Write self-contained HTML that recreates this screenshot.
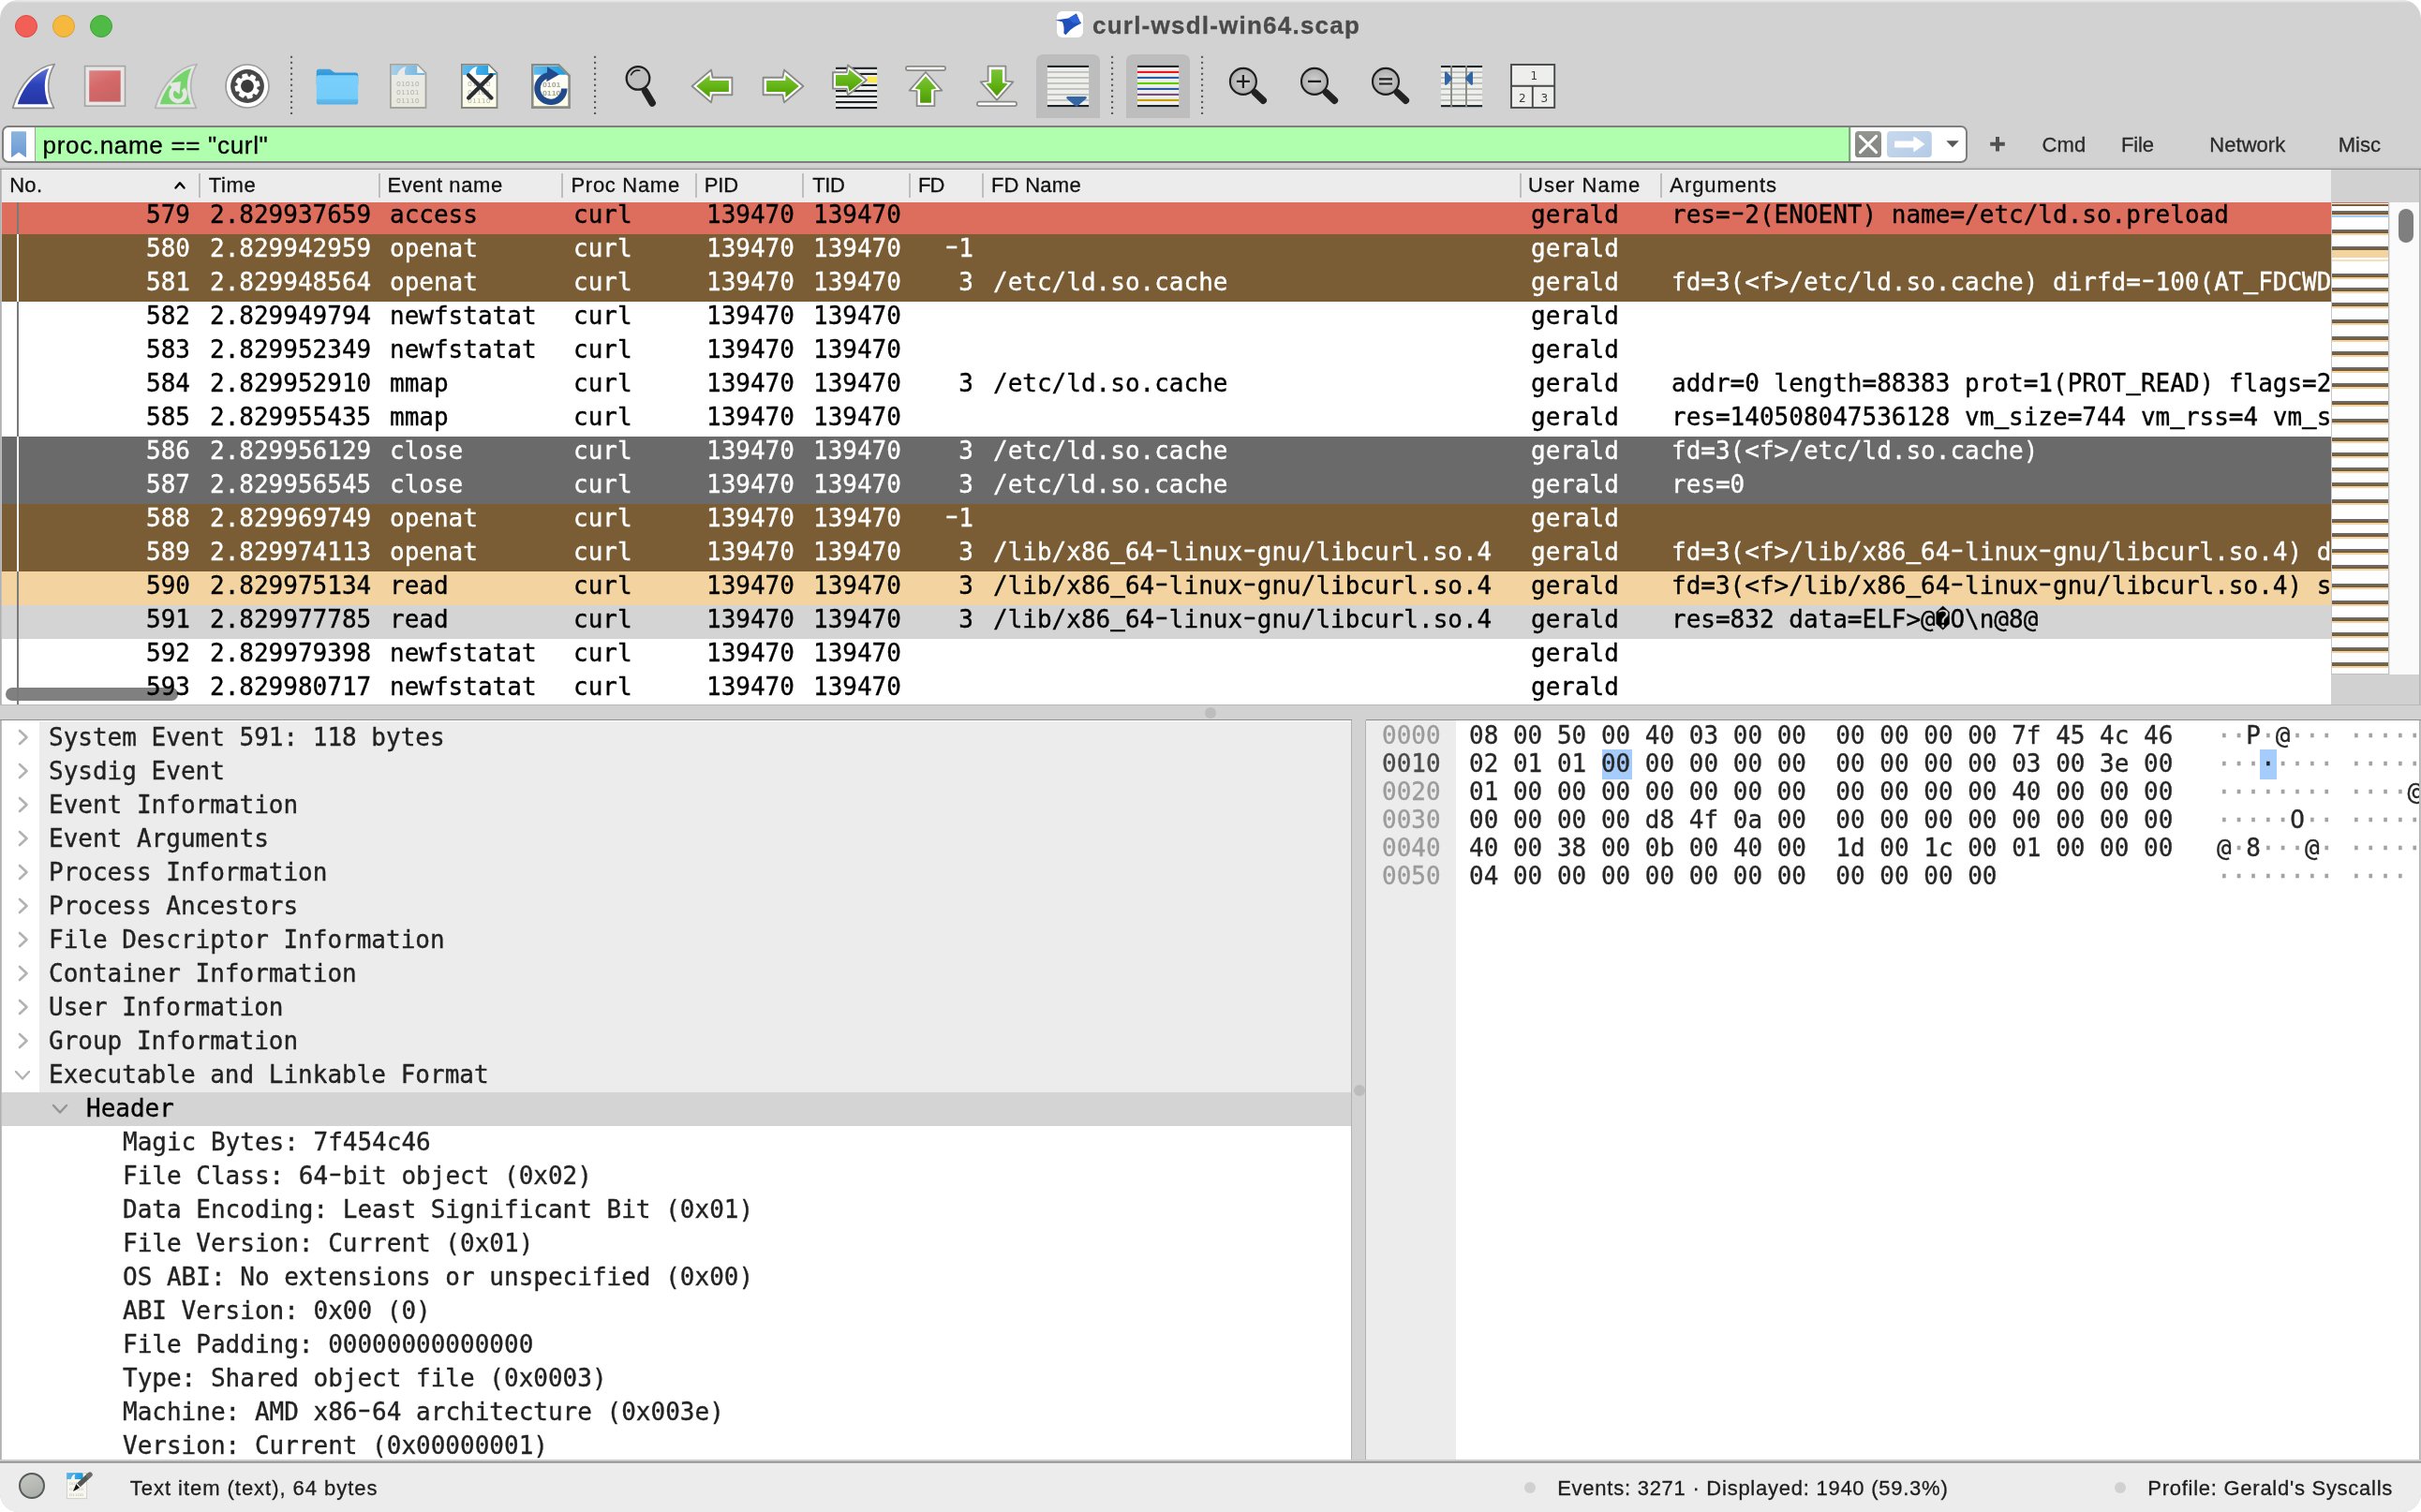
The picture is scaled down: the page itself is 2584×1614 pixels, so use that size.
<!DOCTYPE html>
<html lang="en"><head><meta charset="utf-8"><title>curl-wsdl-win64.scap</title>
<style>
html,body{margin:0;padding:0;background:#fff;}
body{width:2584px;height:1614px;overflow:hidden;position:relative;font-family:"Liberation Sans",sans-serif;}
#win{position:absolute;left:0;top:0;width:2584px;height:1614px;background:#d2d2d2;border-radius:20px;overflow:hidden;will-change:transform;}
.abs{position:absolute;}
.mono{font-family:"DejaVu Sans Mono","Liberation Mono",monospace;font-size:26px;white-space:pre;-webkit-text-stroke:0.35px;}
.mono s{display:inline-block;text-decoration:none;transform:translateY(-3px) scaleX(1.55);}
.mono em{display:inline-block;font-style:normal;transform:translateY(-3.3px) scaleY(1.7);transform-origin:50% 88%;}
.tl{position:absolute;top:16px;width:24px;height:24px;border-radius:50%;box-sizing:border-box;}
#title{position:absolute;left:1167px;top:9px;font-weight:bold;font-size:26px;line-height:36px;color:#4b4b4b;white-space:nowrap;}
/* packet list */
#plist{position:absolute;left:2px;top:181px;width:2486px;height:571px;background:#fff;overflow:hidden;}
#phead{position:absolute;left:0;top:0;width:2486px;height:35px;background:#ececec;z-index:3;}
#phead span{position:absolute;top:0;line-height:35px;font-size:22px;color:#1d1d1d;white-space:nowrap;}
#phead i{position:absolute;top:4px;width:2px;height:26px;background:#bebebe;}
.row{position:absolute;left:0;width:2486px;height:36px;line-height:36px;overflow:hidden;z-index:2;}
.row span{position:absolute;top:-3.5px;}
.row i{position:absolute;left:16px;top:0;width:2px;height:36px;background:#7a7a7a;}
.b i,.g i{background:#fff;}
.r{background:#dd6d5d;color:#000;}
.b{background:#7a5d34;color:#fff;}
.g{background:#6a6a6a;color:#fff;}
.t{background:#f3d3a0;color:#000;}
.s{background:#d4d4d4;color:#000;}
.w{background:transparent;color:#000;}
/* details */
#detail{position:absolute;left:2px;top:769px;width:1440px;height:790px;background:#fff;overflow:hidden;}
.drow{position:absolute;left:0;width:1440px;height:36px;line-height:36px;}
.drow .bg{position:absolute;left:40px;top:0;right:0;height:36px;background:#ececec;}
.drow .tx{position:absolute;top:-1px;color:#222;}
.drow svg{position:absolute;}
#bytes{position:absolute;left:1458px;top:769px;width:1124px;height:790px;background:#fff;overflow:hidden;}
.brow{position:absolute;left:0;height:30px;line-height:30px;width:1300px;}
.brow span{position:absolute;top:0px;}
#status{position:absolute;left:0;top:1560px;z-index:0;width:2584px;height:54px;background:#ececec;}
#status span{position:absolute;font-size:22px;line-height:30px;top:12px;color:#1d1d1d;white-space:nowrap;}
.ut{position:absolute;line-height:30px;white-space:nowrap;-webkit-text-stroke:0.3px;}
.fbtn{position:absolute;top:146px;font-size:22px;line-height:30px;color:#2b2b2b;white-space:nowrap;}
.asc b{font-weight:normal;color:#a2a2a2}.asc u{text-decoration:none;color:#222}
</style></head><body><div id="win">

<div class="abs" style="left:0;top:0;width:2584px;height:3px;background:linear-gradient(#ececec,#e2e2e2 50%,#d2d2d2)"></div>
<div class="tl" style="left:16px;background:#f25f56;border:1px solid #dc4a40"></div>
<div class="tl" style="left:56px;background:#f6b93e;border:1px solid #dca034"></div>
<div class="tl" style="left:96px;background:#4fba45;border:1px solid #3fa335"></div>
<div class="abs" style="left:1128px;top:12px;width:28px;height:28px;border-radius:6px;background:#fff"></div>
<svg class="abs" style="left:1126px;top:12px" width="32" height="28" viewBox="0 0 32 28"><path d="M0.4 9.6 L14.5 7.6 L22.8 2.5 L26.6 11 L28.2 12.8 L21.1 16.6 Q15.5 20 11.4 25.2 L9.4 23.6 Q10.2 16 7.9 11.2 Z" fill="#1f4fb8"/><path d="M14.5 7.6 L22.8 2.5 L26.4 10.6 L28.2 12.8 L19 12.4 Z" fill="#2f63d8"/></svg>
<div class="ut" style="left:1166.00px;top:12.19px;font-size:26px;font-weight:bold;letter-spacing:1.229px;color:#4a4a4a;">curl-wsdl-win64.scap</div>
<svg class="abs" style="left:0;top:56px" width="1700" height="72" viewBox="0 56 1700 72" font-family="DejaVu Sans, Liberation Sans, sans-serif">
<defs>
<linearGradient id="gBlue" x1="0" y1="0" x2="0" y2="1"><stop offset="0" stop-color="#5e72d8"/><stop offset="0.45" stop-color="#2d42ba"/><stop offset="1" stop-color="#2636a3"/></linearGradient>
<linearGradient id="gRed" x1="0" y1="0" x2="0.5" y2="1"><stop offset="0" stop-color="#dc8484"/><stop offset="0.5" stop-color="#d66868"/><stop offset="1" stop-color="#c96464"/></linearGradient>
<linearGradient id="gGreen" x1="0" y1="0" x2="0" y2="1"><stop offset="0" stop-color="#7cc23c"/><stop offset="0.5" stop-color="#64b516"/><stop offset="1" stop-color="#4e9a06"/></linearGradient>
<linearGradient id="gGreenF" x1="0" y1="1" x2="0" y2="0"><stop offset="0" stop-color="#7cc23c"/><stop offset="0.5" stop-color="#64b516"/><stop offset="1" stop-color="#4e9a06"/></linearGradient>
<radialGradient id="gLens" cx="0.5" cy="0.5" r="0.55"><stop offset="0" stop-color="#d4d4d4"/><stop offset="1" stop-color="#a8a8a8"/></radialGradient>
<linearGradient id="gFold" x1="0" y1="0" x2="0" y2="1"><stop offset="0" stop-color="#7ad0fb"/><stop offset="0.8" stop-color="#74ccf9"/><stop offset="0.82" stop-color="#62bdf0"/><stop offset="1" stop-color="#52b0e8"/></linearGradient>
<linearGradient id="gTab" x1="0" y1="0" x2="0" y2="1"><stop offset="0" stop-color="#46a3de"/><stop offset="1" stop-color="#0a84d6"/></linearGradient>
<linearGradient id="gHdrDis" x1="0" y1="0" x2="1" y2="0"><stop offset="0" stop-color="#a9cfe8"/><stop offset="1" stop-color="#6db5e0"/></linearGradient>
<linearGradient id="gHdr" x1="0" y1="0" x2="1" y2="0"><stop offset="0" stop-color="#62bbec"/><stop offset="1" stop-color="#189adf"/></linearGradient>
<linearGradient id="gPage" x1="0" y1="0" x2="0" y2="1"><stop offset="0" stop-color="#ffffff"/><stop offset="1" stop-color="#fbfbe4"/></linearGradient>
<linearGradient id="gPageDis" x1="0" y1="0" x2="0" y2="1"><stop offset="0" stop-color="#eaeaea"/><stop offset="1" stop-color="#e8e8dc"/></linearGradient>
<path id="fin" d="M45.2 0.5 C26 3 8 20.5 0.6 47.3 L44.6 47.3 C36 31.5 37.2 14 45.2 0.5 Z"/>
<path id="finIn" d="M39.2 5 C25.5 9 12 23.5 5.8 43.2 L38.7 43.2 C33.2 29.5 33.6 16.5 39.2 5 Z"/>
<path id="arrO" d="M738.6 92 L759 74.6 L760.6 82.8 L781.4 82.8 L781.4 101.3 L760.6 101.3 L759 109.4 Z"/>
<path id="arrI" d="M743.2 92 L757.6 80 L757.6 86 L777.9 86 L777.9 98 L757.6 98 L757.6 104 Z"/>
<g id="upArrO">
<rect x="966.9" y="70.8" width="42.2" height="4.4" rx="2.2" fill="#fff" stroke="#888a85" stroke-width="1.7"/>
<path d="M988 77 L1005.4 96.6 L997.4 97.2 L997.4 113.2 L978.6 113.2 L978.6 97.2 L970.6 96.6 Z" fill="#fff" stroke="#888a85" stroke-width="1.8" stroke-linejoin="round"/>
</g>
<path id="upArrI" d="M988 81.3 L999.6 94.6 Q997 95.6 993.9 95.4 L993.9 109.7 L982.1 109.7 L982.1 95.4 Q979 95.6 976.4 94.6 Z"/>
<g id="page">
<path d="M0.9 0.9 L29.5 0.9 L38.5 9.9 L38.5 47 L0.9 47 Z" stroke-width="1.8" stroke-linejoin="miter"/>
</g>
<path id="finW" d="M17.6 3 C12 4 9 8 8 12 L16.5 12 C15.5 9 16 5.5 17.6 3 Z"/>
<g id="lens"><line x1="12.6" y1="12" x2="21.4" y2="20.4" stroke="#222" stroke-width="7.4" stroke-linecap="round"/><line x1="0" y1="0" x2="12" y2="11.5" stroke="#222" stroke-width="3.4"/><circle r="14" fill="url(#gLens)" stroke="#1e1e1e" stroke-width="2.1"/></g>
<g fill="#5a5a5a" id="sep"><rect x="-1" y="59.8" width="2.1" height="2.1"/><rect x="-1" y="65.8" width="2.1" height="2.1"/><rect x="-1" y="71.8" width="2.1" height="2.1"/><rect x="-1" y="77.8" width="2.1" height="2.1"/><rect x="-1" y="83.8" width="2.1" height="2.1"/><rect x="-1" y="89.8" width="2.1" height="2.1"/><rect x="-1" y="95.8" width="2.1" height="2.1"/><rect x="-1" y="101.9" width="2.1" height="2.1"/><rect x="-1" y="107.9" width="2.1" height="2.1"/><rect x="-1" y="113.9" width="2.1" height="2.1"/><rect x="-1" y="119.9" width="2.1" height="2.1"/></g>
</defs>
<!-- checked button backgrounds -->
<path d="M1106 126 L1106 66 Q1106 58 1114 58 L1166 58 Q1174 58 1174 66 L1174 126 Z" fill="#bdbdbd"/>
<path d="M1202 126 L1202 66 Q1202 58 1210 58 L1262 58 Q1270 58 1270 66 L1270 126 Z" fill="#bdbdbd"/>
<!-- separators -->
<use href="#sep" x="311"/><use href="#sep" x="635"/><use href="#sep" x="1187"/><use href="#sep" x="1283"/>
<!-- 1 start capture fin -->
<g transform="translate(13,68)"><use href="#fin" fill="#fff" stroke="#8f8f8f" stroke-width="1.7" stroke-linejoin="round"/><use href="#finIn" fill="url(#gBlue)"/></g>
<!-- 2 stop -->
<rect x="90.6" y="70.6" width="42.9" height="42.6" fill="#e6e6e6" stroke="#a4a4a4" stroke-width="1.6"/>
<rect x="95.2" y="75.3" width="33.5" height="33.3" fill="url(#gRed)"/>
<!-- 3 restart fin -->
<g transform="translate(165,68)"><use href="#fin" fill="#e4e4e4" stroke="#b4b4b4" stroke-width="1.7" stroke-linejoin="round"/><use href="#finIn" fill="#76d56a"/>
<path d="M30.4 27.2 A7.5 7.5 0 1 1 21.2 26" fill="none" stroke="#e6e6e6" stroke-width="4.6"/>
<path d="M14.7 20.9 L28 18.9 L26.5 32.5 L21.3 28.4 Z" fill="#e6e6e6"/>
</g>
<!-- 4 options gear -->
<circle cx="264" cy="92" r="23" fill="#fff" stroke="#9a9a9a" stroke-width="1.7"/>
<circle cx="264" cy="92" r="17.9" fill="#484848"/>
<g transform="translate(264,92) rotate(32)" fill="#fff">
<circle r="10.6"/>
<g id="teeth"><rect x="-3.1" y="-13.4" width="6.2" height="26.8" rx="1.3"/></g>
<use href="#teeth" transform="rotate(45)"/><use href="#teeth" transform="rotate(90)"/><use href="#teeth" transform="rotate(135)"/>
<circle r="6.9" fill="#3a3a3a"/>
</g>
<!-- 5 folder -->
<path d="M337.8 83 L337.8 76.2 Q337.8 73.7 340.3 73.7 L350.6 73.7 Q352.4 73.7 353.8 75 L355.6 76.6 Q356.8 77.6 358.6 77.6 L379.4 77.6 Q382.2 77.6 382.2 80.4 L382.2 90 L337.8 90 Z" fill="url(#gTab)"/>
<rect x="337.8" y="80.2" width="44.4" height="31.4" rx="2.6" fill="url(#gFold)"/>
<!-- 6 save (disabled) -->
<g transform="translate(416,68)">
<use href="#page" fill="url(#gPageDis)" stroke="#a3a39f"/>
<path d="M1.9 1.9 L29.2 1.9 L29.2 10 L37.5 10 L37.5 12 L1.9 12 Z" fill="url(#gHdrDis)"/>
<use href="#finW" fill="#e9e9e9"/>
<path d="M29.7 2.2 L29.7 9.4 L36.9 9.4 Z" fill="#f0f0ec"/>
<g font-size="6.6" fill="#b4b4b0"><text x="7" y="23.6" textLength="24.6" lengthAdjust="spacingAndGlyphs">01010</text><text x="7" y="32.6" textLength="24.6" lengthAdjust="spacingAndGlyphs">01101</text><text x="7" y="41.6" textLength="24.6" lengthAdjust="spacingAndGlyphs">01110</text></g>
</g>
<!-- 7 close -->
<g transform="translate(492,68)">
<use href="#page" fill="url(#gPage)" stroke="#85857f"/>
<path d="M1.9 1.9 L29.2 1.9 L29.2 10 L37.5 10 L37.5 12 L1.9 12 Z" fill="url(#gHdr)"/>
<use href="#finW" fill="#fff"/>
<path d="M29.7 2.2 L29.7 9.4 L36.9 9.4 Z" fill="#fbfbf0"/>
<g font-size="6.6" fill="#b4b4b0"><text x="7" y="23.6" textLength="24.6" lengthAdjust="spacingAndGlyphs">01010</text><text x="7" y="32.6" textLength="24.6" lengthAdjust="spacingAndGlyphs">01101</text><text x="7" y="41.6" textLength="24.6" lengthAdjust="spacingAndGlyphs">01110</text></g>
<path d="M8.2 12.2 L32.4 36.4 M32.4 12.2 L8.2 36.4" stroke="#2b2f33" stroke-width="4.3" stroke-linecap="round"/>
</g>
<!-- 8 reload -->
<g transform="translate(567,68)">
<path d="M1.3 1.3 L29.2 1.3 L40.6 12.8 L40.6 46.6 L1.3 46.6 Z" fill="url(#gPage)" stroke="#898b87" stroke-width="2.6"/>
<path d="M2.6 2.7 L29 2.7 L38 11.8 L2.6 11.8 Z" fill="url(#gHdr)"/>
<g font-size="7" fill="#a9a9a4" font-weight="bold"><text x="12" y="24.5">0101</text><text x="12" y="33.5">0110</text></g>
<path d="M35.3 26.5 A14.4 14.4 0 1 1 17.6 12.5" fill="none" stroke="#204a8c" stroke-width="6.4"/>
<path d="M17.2 3.3 L29.9 11.4 L16.4 19.2 Z" fill="#204a8c"/>
</g>
<!-- 9 find -->
<g>
<line x1="688.6" y1="97.2" x2="696.2" y2="110" stroke="#222" stroke-width="7.4" stroke-linecap="round"/>
<line x1="685" y1="92" x2="689" y2="98" stroke="#222" stroke-width="3"/>
<circle cx="681" cy="83.4" r="12.3" fill="#bfbfbf" stroke="#1e1e1e" stroke-width="2.3"/>
<path d="M673.6 79.8 A8.3 8.3 0 0 1 682.6 75.3" fill="none" stroke="#222" stroke-width="1.6" stroke-linecap="round"/>
</g>
<!-- 10 back / 11 forward -->
<use href="#arrO" fill="#fff" stroke="#888a85" stroke-width="1.9" stroke-linejoin="round"/><use href="#arrI" fill="url(#gGreen)"/>
<g transform="translate(1596,0) scale(-1,1)"><use href="#arrO" fill="#fff" stroke="#888a85" stroke-width="1.9" stroke-linejoin="round"/><use href="#arrI" fill="url(#gGreen)"/></g>
<!-- 12 go to -->
<g>
<rect x="892" y="72" width="44.1" height="43" fill="#eeeeec"/>
<rect x="926" y="82" width="10.1" height="6" fill="#fce94f"/>
<g fill="#1c2226"><rect x="892" y="71.8" width="44.1" height="2.1"/><rect x="892" y="77.9" width="44.1" height="2.1"/><rect x="892" y="89.9" width="44.1" height="2.1"/><rect x="892" y="96" width="44.1" height="2.1"/><rect x="892" y="102" width="44.1" height="2.1"/><rect x="892" y="108" width="44.1" height="2.1"/><rect x="892" y="114" width="44.1" height="2.1"/></g>
<path d="M888.9 77.2 L903.6 77.2 L905 69.4 L925 85.6 L905 101.6 L903.6 94.6 L888.9 94.6 Z" fill="#fff" stroke="#888a85" stroke-width="1.9" stroke-linejoin="round"/>
<path d="M892 80.1 L905 80.1 L906.4 74.3 L921 86 L906.4 97.8 L905 91.8 L892 91.8 Z" fill="url(#gGreen)"/>
</g>
<!-- 13 first / 14 last -->
<use href="#upArrO"/><use href="#upArrI" fill="url(#gGreen)"/>
<g transform="translate(76,183.9) scale(1,-1)"><use href="#upArrO"/><use href="#upArrI" fill="url(#gGreenF)"/></g>
<!-- 15 autoscroll -->
<g>
<rect x="1117.9" y="70" width="44.2" height="44" fill="#eeeeec"/>
<g fill="#babdb6"><rect x="1117.9" y="76.1" width="44.2" height="1.7"/><rect x="1117.9" y="82.1" width="44.2" height="1.7"/><rect x="1117.9" y="88.1" width="44.2" height="1.7"/><rect x="1117.9" y="94.1" width="44.2" height="1.7"/><rect x="1117.9" y="100.1" width="44.2" height="1.7"/><rect x="1117.9" y="106.1" width="44.2" height="1.7"/></g>
<rect x="1117.9" y="69.9" width="44.2" height="2.1" fill="#1c2226"/><rect x="1117.9" y="112" width="44.2" height="2.1" fill="#1c2226"/>
<path d="M1139.4 104.3 L1158.6 104.3 L1149 112.6 Z" fill="#3465a4" stroke="#3465a4" stroke-width="2.4" stroke-linejoin="round"/>
</g>
<!-- 16 colorize -->
<g>
<rect x="1214" y="70" width="44.2" height="44" fill="#eeeeec"/>
<rect x="1214" y="75.9" width="44.2" height="2.1" fill="#ef1818"/><rect x="1214" y="81.9" width="44.2" height="2.1" fill="#2a5da8"/><rect x="1214" y="87.9" width="44.2" height="2.1" fill="#5fce00"/><rect x="1214" y="93.9" width="44.2" height="2.1" fill="#2a5da8"/><rect x="1214" y="99.9" width="44.2" height="2.1" fill="#75507b"/><rect x="1214" y="105.9" width="44.2" height="2.1" fill="#c4a000"/>
<rect x="1214" y="69.9" width="44.2" height="2.1" fill="#1c2226"/><rect x="1214" y="112" width="44.2" height="2.1" fill="#1c2226"/>
</g>
<!-- 17-19 zoom -->
<g transform="translate(1326.9,86.9)"><use href="#lens"/><path d="M-7 0 L7 0 M0 -7 L0 7" stroke="#1e1e1e" stroke-width="2.3"/></g>
<g transform="translate(1403,86.9)"><use href="#lens"/><path d="M-7 0 L7 0" stroke="#1e1e1e" stroke-width="2.3"/></g>
<g transform="translate(1479,86.9)"><use href="#lens"/><path d="M-7 -2.6 L7 -2.6 M-7 2.6 L7 2.6" stroke="#1e1e1e" stroke-width="2.2"/></g>
<!-- 20 resize columns -->
<g>
<rect x="1538" y="70" width="44.1" height="44" fill="#eeeeec"/>
<g fill="#babdb6"><rect x="1538" y="76.2" width="44.1" height="1.8"/><rect x="1538" y="82.1" width="44.1" height="1.8"/><rect x="1538" y="88" width="44.1" height="1.8"/><rect x="1538" y="94.1" width="44.1" height="1.8"/><rect x="1538" y="100.1" width="44.1" height="1.8"/><rect x="1538" y="106.1" width="44.1" height="1.8"/></g>
<rect x="1538" y="70" width="44.1" height="2.1" fill="#1c2226"/><rect x="1538" y="112.1" width="44.1" height="2.1" fill="#1c2226"/>
<rect x="1548.1" y="70" width="1.9" height="44.2" fill="#888a85"/><rect x="1564" y="70" width="1.9" height="44.2" fill="#888a85"/>
<path d="M1543.2 77.7 L1548.8 83.6 L1543.2 89.7 Z" fill="#3465a4" stroke="#3465a4" stroke-width="2.4" stroke-linejoin="round"/>
<path d="M1570.8 77.7 L1565.2 83.6 L1570.8 89.7 Z" fill="#3465a4" stroke="#3465a4" stroke-width="2.4" stroke-linejoin="round"/>
</g>
<!-- 21 layout -->
<g>
<rect x="1613" y="69" width="46.2" height="45.9" fill="#eeeeec" stroke="#474a4a" stroke-width="1.9"/>
<path d="M1613 91.8 L1659.2 91.8 M1635.8 91.8 L1635.8 115" stroke="#474a4a" stroke-width="1.9"/>
<g font-size="12" fill="#3a3d3d" text-anchor="middle"><text x="1637.4" y="85.2">1</text><text x="1624.9" y="108.5">2</text><text x="1648.3" y="108.5">3</text></g>
</g>
</svg>

<div class="abs" style="left:2px;top:134px;width:2098px;height:40px;box-sizing:border-box;border:2px solid #7e7e7e;border-radius:7px;background:#fff;overflow:hidden"><div class="abs" style="left:33px;top:0;width:1938px;height:36px;background:#afffaf;border-left:1.5px solid #a3a0a3"></div></div>
<div class="ut" style="left:45.50px;top:139.89px;font-size:26px;letter-spacing:0.685px;color:#000;">proc.name == &quot;curl&quot;</div>
<svg class="abs" style="left:0;top:132px" width="2160" height="44" viewBox="0 132 2160 44">
<defs>
<linearGradient id="gBm" x1="0" y1="0" x2="0" y2="1"><stop offset="0" stop-color="#8db4df"/><stop offset="1" stop-color="#6a9ad2"/></linearGradient>
<linearGradient id="gClr" x1="0" y1="0" x2="0" y2="1"><stop offset="0" stop-color="#969893"/><stop offset="0.4" stop-color="#888a85"/><stop offset="1" stop-color="#868883"/></linearGradient>
<linearGradient id="gApply" x1="0" y1="0" x2="1" y2="1"><stop offset="0" stop-color="#c8d9ed"/><stop offset="1" stop-color="#b4cbe6"/></linearGradient>
</defs>
<path d="M13 140.2 L27 140.2 Q28 140.2 28 141.2 L28 167 Q28 168.4 26.9 167.6 L20 162.4 L13.1 167.6 Q12 168.4 12 167 L12 141.2 Q12 140.2 13 140.2 Z" fill="url(#gBm)"/>
<rect x="1973.2" y="136" width="1.7" height="36" fill="#8a8a8a"/>
<rect x="1980" y="140" width="28" height="28" rx="3.6" fill="url(#gClr)"/>
<path d="M1985.4 145.4 L2002.6 162.6 M2002.6 145.4 L1985.4 162.6" stroke="#fff" stroke-width="2.9" stroke-linecap="round"/>
<rect x="2014" y="140" width="47.8" height="28" rx="4" fill="url(#gApply)"/>
<path d="M2023.2 150.4 L2042.3 150.4 L2042.3 146.6 Q2042.3 145.2 2043.5 146 L2053.6 153.2 Q2054.4 153.9 2053.6 154.5 L2043.5 161.8 Q2042.3 162.6 2042.3 161.2 L2042.3 157.6 L2023.2 157.6 Q2022 157.6 2022 156.4 L2022 151.6 Q2022 150.4 2023.2 150.4 Z" fill="#fff"/>
<path d="M2077.3 150.3 L2090.8 150.3 L2084 157.2 Z" fill="#555753"/>
<path d="M2124.2 153.8 L2139.8 153.8 M2132 146 L2132 161.6" stroke="#505050" stroke-width="4"/>
</svg>

<div class="ut" style="left:2179.40px;top:140.28px;font-size:22px;letter-spacing:0.193px;color:#2b2b2b;">Cmd</div><div class="ut" style="left:2264.00px;top:140.28px;font-size:22px;letter-spacing:-0.138px;color:#2b2b2b;">File</div><div class="ut" style="left:2358.30px;top:140.28px;font-size:22px;letter-spacing:0.036px;color:#2b2b2b;">Network</div><div class="ut" style="left:2495.80px;top:140.28px;font-size:22px;letter-spacing:-0.005px;color:#2b2b2b;">Misc</div>
<div class="abs" style="left:0;top:178px;width:2584px;height:2px;background:#c6c6c6"></div><div class="abs" style="left:0;top:180px;width:2584px;height:1px;background:#8e8e8e"></div>
<div class="abs" style="left:0;top:181px;width:2px;height:1379px;background:linear-gradient(90deg,#b0b0b0,#b0b0b0 50%,#cfcfcf)"></div>
<div class="abs" style="left:2581.5px;top:181px;width:2.5px;height:1379px;background:linear-gradient(90deg,#b4b4b4,#b4b4b4 55%,#d2d2d2)"></div>
<div id="plist"><div id="phead">
<div class="ut" style="left:8.20px;top:2.08px;font-size:22px;letter-spacing:0.288px;color:#111;">No.</div>
<div class="ut" style="left:220.70px;top:2.08px;font-size:22px;letter-spacing:0.621px;color:#111;">Time</div>
<div class="ut" style="left:411.50px;top:2.08px;font-size:22px;letter-spacing:0.582px;color:#111;">Event name</div>
<div class="ut" style="left:607.50px;top:2.08px;font-size:22px;letter-spacing:0.700px;color:#111;">Proc Name</div>
<div class="ut" style="left:749.80px;top:2.08px;font-size:22px;letter-spacing:-0.193px;color:#111;">PID</div>
<div class="ut" style="left:865.20px;top:2.08px;font-size:22px;letter-spacing:-0.375px;color:#111;">TID</div>
<div class="ut" style="left:978.00px;top:2.08px;font-size:22px;letter-spacing:-1.038px;color:#111;">FD</div>
<div class="ut" style="left:1055.90px;top:2.08px;font-size:22px;letter-spacing:0.269px;color:#111;">FD Name</div>
<div class="ut" style="left:1629.00px;top:2.08px;font-size:22px;letter-spacing:0.999px;color:#111;">User Name</div>
<div class="ut" style="left:1780.30px;top:2.08px;font-size:22px;letter-spacing:0.915px;color:#111;">Arguments</div>
<i style="left:210px"></i>
<i style="left:402px"></i>
<i style="left:597px"></i>
<i style="left:740px"></i>
<i style="left:854px"></i>
<i style="left:968px"></i>
<i style="left:1046px"></i>
<i style="left:1620px"></i>
<i style="left:1770px"></i>
<svg class="abs" style="left:183px;top:11px" width="14" height="12" viewBox="0 0 14 12"><path d="M2.5 8.5 L7 3.3 L11.5 8.5" fill="none" stroke="#000" stroke-width="2.4" stroke-linecap="round" stroke-linejoin="round"/></svg>
</div>
<div class="abs" style="left:4px;top:553px;width:184px;height:14px;border-radius:7px;background:#808080;z-index:1"></div>
<div class="row mono r" style="top:33px"><i></i><span style="right:2285px">579</span><span style="left:222px">2.829937659</span><span style="left:414px">access</span><span style="left:610px">curl</span><span style="left:752px">139470</span><span style="left:866px">139470</span><span style="right:1449px"></span><span style="left:1058px"></span><span style="left:1632px">gerald</span><span style="left:1782px">res=<s>-</s>2(ENOENT) name=/etc/ld.so.preload</span></div>
<div class="row mono b" style="top:69px"><i></i><span style="right:2285px">580</span><span style="left:222px">2.829942959</span><span style="left:414px">openat</span><span style="left:610px">curl</span><span style="left:752px">139470</span><span style="left:866px">139470</span><span style="right:1449px"><s>-</s>1</span><span style="left:1058px"></span><span style="left:1632px">gerald</span><span style="left:1782px"></span></div>
<div class="row mono b" style="top:105px"><i></i><span style="right:2285px">581</span><span style="left:222px">2.829948564</span><span style="left:414px">openat</span><span style="left:610px">curl</span><span style="left:752px">139470</span><span style="left:866px">139470</span><span style="right:1449px">3</span><span style="left:1058px">/etc/ld.so.cache</span><span style="left:1632px">gerald</span><span style="left:1782px">fd=3(&lt;f&gt;/etc/ld.so.cache) dirfd=<s>-</s>100(AT<em>_</em>FDCWD) name=/etc/ld.so.cache</span></div>
<div class="row mono w" style="top:141px"><i></i><span style="right:2285px">582</span><span style="left:222px">2.829949794</span><span style="left:414px">newfstatat</span><span style="left:610px">curl</span><span style="left:752px">139470</span><span style="left:866px">139470</span><span style="right:1449px"></span><span style="left:1058px"></span><span style="left:1632px">gerald</span><span style="left:1782px"></span></div>
<div class="row mono w" style="top:177px"><i></i><span style="right:2285px">583</span><span style="left:222px">2.829952349</span><span style="left:414px">newfstatat</span><span style="left:610px">curl</span><span style="left:752px">139470</span><span style="left:866px">139470</span><span style="right:1449px"></span><span style="left:1058px"></span><span style="left:1632px">gerald</span><span style="left:1782px"></span></div>
<div class="row mono w" style="top:213px"><i></i><span style="right:2285px">584</span><span style="left:222px">2.829952910</span><span style="left:414px">mmap</span><span style="left:610px">curl</span><span style="left:752px">139470</span><span style="left:866px">139470</span><span style="right:1449px">3</span><span style="left:1058px">/etc/ld.so.cache</span><span style="left:1632px">gerald</span><span style="left:1782px">addr=0 length=88383 prot=1(PROT<em>_</em>READ) flags=2(MAP<em>_</em>PRIVATE)</span></div>
<div class="row mono w" style="top:249px"><i></i><span style="right:2285px">585</span><span style="left:222px">2.829955435</span><span style="left:414px">mmap</span><span style="left:610px">curl</span><span style="left:752px">139470</span><span style="left:866px">139470</span><span style="right:1449px"></span><span style="left:1058px"></span><span style="left:1632px">gerald</span><span style="left:1782px">res=140508047536128 vm<em>_</em>size=744 vm<em>_</em>rss=4 vm<em>_</em>swap=0</span></div>
<div class="row mono g" style="top:285px"><i></i><span style="right:2285px">586</span><span style="left:222px">2.829956129</span><span style="left:414px">close</span><span style="left:610px">curl</span><span style="left:752px">139470</span><span style="left:866px">139470</span><span style="right:1449px">3</span><span style="left:1058px">/etc/ld.so.cache</span><span style="left:1632px">gerald</span><span style="left:1782px">fd=3(&lt;f&gt;/etc/ld.so.cache)</span></div>
<div class="row mono g" style="top:321px"><i></i><span style="right:2285px">587</span><span style="left:222px">2.829956545</span><span style="left:414px">close</span><span style="left:610px">curl</span><span style="left:752px">139470</span><span style="left:866px">139470</span><span style="right:1449px">3</span><span style="left:1058px">/etc/ld.so.cache</span><span style="left:1632px">gerald</span><span style="left:1782px">res=0</span></div>
<div class="row mono b" style="top:357px"><i></i><span style="right:2285px">588</span><span style="left:222px">2.829969749</span><span style="left:414px">openat</span><span style="left:610px">curl</span><span style="left:752px">139470</span><span style="left:866px">139470</span><span style="right:1449px"><s>-</s>1</span><span style="left:1058px"></span><span style="left:1632px">gerald</span><span style="left:1782px"></span></div>
<div class="row mono b" style="top:393px"><i></i><span style="right:2285px">589</span><span style="left:222px">2.829974113</span><span style="left:414px">openat</span><span style="left:610px">curl</span><span style="left:752px">139470</span><span style="left:866px">139470</span><span style="right:1449px">3</span><span style="left:1058px">/lib/x86<em>_</em>64<s>-</s>linux<s>-</s>gnu/libcurl.so.4</span><span style="left:1632px">gerald</span><span style="left:1782px">fd=3(&lt;f&gt;/lib/x86<em>_</em>64<s>-</s>linux<s>-</s>gnu/libcurl.so.4) dirfd=<s>-</s>100</span></div>
<div class="row mono t" style="top:429px"><i></i><span style="right:2285px">590</span><span style="left:222px">2.829975134</span><span style="left:414px">read</span><span style="left:610px">curl</span><span style="left:752px">139470</span><span style="left:866px">139470</span><span style="right:1449px">3</span><span style="left:1058px">/lib/x86<em>_</em>64<s>-</s>linux<s>-</s>gnu/libcurl.so.4</span><span style="left:1632px">gerald</span><span style="left:1782px">fd=3(&lt;f&gt;/lib/x86<em>_</em>64<s>-</s>linux<s>-</s>gnu/libcurl.so.4) size=832</span></div>
<div class="row mono s" style="top:465px"><i></i><span style="right:2285px">591</span><span style="left:222px">2.829977785</span><span style="left:414px">read</span><span style="left:610px">curl</span><span style="left:752px">139470</span><span style="left:866px">139470</span><span style="right:1449px">3</span><span style="left:1058px">/lib/x86<em>_</em>64<s>-</s>linux<s>-</s>gnu/libcurl.so.4</span><span style="left:1632px">gerald</span><span style="left:1782px">res=832 data=ELF&gt;@�O\n@8@</span></div>
<div class="row mono w" style="top:501px"><i></i><span style="right:2285px">592</span><span style="left:222px">2.829979398</span><span style="left:414px">newfstatat</span><span style="left:610px">curl</span><span style="left:752px">139470</span><span style="left:866px">139470</span><span style="right:1449px"></span><span style="left:1058px"></span><span style="left:1632px">gerald</span><span style="left:1782px"></span></div>
<div class="row mono w" style="top:537px"><i></i><span style="right:2285px">593</span><span style="left:222px">2.829980717</span><span style="left:414px">newfstatat</span><span style="left:610px">curl</span><span style="left:752px">139470</span><span style="left:866px">139470</span><span style="right:1449px"></span><span style="left:1058px"></span><span style="left:1632px">gerald</span><span style="left:1782px"></span></div>
</div>
<div class="abs" style="left:2488px;top:181px;width:94px;height:571px;background:#d1d1d1"></div>
<svg class="abs" style="left:2488px;top:216px" width="62" height="504" viewBox="2488 216 62 504" shape-rendering="crispEdges">
<rect x="2488" y="216" width="62" height="504" fill="#fff"/>
<rect x="2488" y="216" width="62" height="1" fill="#de6e5e"/>
<rect x="2488" y="218" width="62" height="2" fill="#7a5d34"/>
<rect x="2488" y="225" width="62" height="2" fill="#6a6a6a"/><rect x="2488" y="227" width="62" height="2" fill="#7a5d34"/><rect x="2488" y="229" width="62" height="2" fill="#f3d3a0"/>
<rect x="2488" y="230" width="62" height="2" fill="#a6ccfc"/>
<rect x="2488" y="245" width="62" height="2" fill="#6a6a6a"/><rect x="2488" y="247" width="62" height="2" fill="#7a5d34"/><rect x="2488" y="249" width="62" height="2" fill="#f3d3a0"/>
<rect x="2488" y="263" width="62" height="2" fill="#6a6a6a"/><rect x="2488" y="265" width="62" height="2" fill="#7a5d34"/><rect x="2488" y="267" width="62" height="2" fill="#f3d3a0"/>
<rect x="2488" y="292" width="62" height="2" fill="#6a6a6a"/><rect x="2488" y="294" width="62" height="2" fill="#7a5d34"/><rect x="2488" y="296" width="62" height="2" fill="#f3d3a0"/>
<rect x="2488" y="307" width="62" height="2" fill="#6a6a6a"/><rect x="2488" y="309" width="62" height="2" fill="#7a5d34"/><rect x="2488" y="311" width="62" height="2" fill="#f3d3a0"/>
<rect x="2488" y="323" width="62" height="2" fill="#6a6a6a"/><rect x="2488" y="325" width="62" height="2" fill="#7a5d34"/><rect x="2488" y="327" width="62" height="2" fill="#f3d3a0"/>
<rect x="2488" y="341" width="62" height="2" fill="#6a6a6a"/><rect x="2488" y="343" width="62" height="2" fill="#7a5d34"/><rect x="2488" y="345" width="62" height="2" fill="#f3d3a0"/>
<rect x="2488" y="359" width="62" height="2" fill="#6a6a6a"/><rect x="2488" y="361" width="62" height="2" fill="#7a5d34"/><rect x="2488" y="363" width="62" height="2" fill="#f3d3a0"/>
<rect x="2488" y="375" width="62" height="2" fill="#6a6a6a"/><rect x="2488" y="377" width="62" height="2" fill="#7a5d34"/><rect x="2488" y="379" width="62" height="2" fill="#f3d3a0"/>
<rect x="2488" y="392" width="62" height="2" fill="#6a6a6a"/><rect x="2488" y="394" width="62" height="2" fill="#7a5d34"/><rect x="2488" y="396" width="62" height="2" fill="#f3d3a0"/>
<rect x="2488" y="409" width="62" height="2" fill="#6a6a6a"/><rect x="2488" y="411" width="62" height="2" fill="#7a5d34"/><rect x="2488" y="413" width="62" height="2" fill="#f3d3a0"/>
<rect x="2488" y="428" width="62" height="2" fill="#6a6a6a"/><rect x="2488" y="430" width="62" height="2" fill="#7a5d34"/><rect x="2488" y="432" width="62" height="2" fill="#f3d3a0"/>
<rect x="2488" y="447" width="62" height="2" fill="#6a6a6a"/><rect x="2488" y="449" width="62" height="2" fill="#7a5d34"/><rect x="2488" y="451" width="62" height="2" fill="#f3d3a0"/>
<rect x="2488" y="467" width="62" height="2" fill="#6a6a6a"/><rect x="2488" y="469" width="62" height="2" fill="#7a5d34"/><rect x="2488" y="471" width="62" height="2" fill="#f3d3a0"/>
<rect x="2488" y="483" width="62" height="2" fill="#6a6a6a"/><rect x="2488" y="485" width="62" height="2" fill="#7a5d34"/><rect x="2488" y="487" width="62" height="2" fill="#f3d3a0"/>
<rect x="2488" y="499" width="62" height="2" fill="#6a6a6a"/><rect x="2488" y="501" width="62" height="2" fill="#7a5d34"/><rect x="2488" y="503" width="62" height="2" fill="#f3d3a0"/>
<rect x="2488" y="515" width="62" height="2" fill="#6a6a6a"/><rect x="2488" y="517" width="62" height="2" fill="#7a5d34"/><rect x="2488" y="519" width="62" height="2" fill="#f3d3a0"/>
<rect x="2488" y="533" width="62" height="2" fill="#6a6a6a"/><rect x="2488" y="535" width="62" height="2" fill="#7a5d34"/><rect x="2488" y="537" width="62" height="2" fill="#f3d3a0"/>
<rect x="2488" y="554" width="62" height="2" fill="#6a6a6a"/><rect x="2488" y="556" width="62" height="2" fill="#7a5d34"/><rect x="2488" y="558" width="62" height="2" fill="#f3d3a0"/>
<rect x="2488" y="569" width="62" height="2" fill="#6a6a6a"/><rect x="2488" y="571" width="62" height="2" fill="#7a5d34"/><rect x="2488" y="573" width="62" height="2" fill="#f3d3a0"/>
<rect x="2488" y="586" width="62" height="2" fill="#6a6a6a"/><rect x="2488" y="588" width="62" height="2" fill="#7a5d34"/><rect x="2488" y="590" width="62" height="2" fill="#f3d3a0"/>
<rect x="2488" y="603" width="62" height="2" fill="#6a6a6a"/><rect x="2488" y="605" width="62" height="2" fill="#7a5d34"/><rect x="2488" y="607" width="62" height="2" fill="#f3d3a0"/>
<rect x="2488" y="623" width="62" height="2" fill="#6a6a6a"/><rect x="2488" y="625" width="62" height="2" fill="#7a5d34"/><rect x="2488" y="627" width="62" height="2" fill="#f3d3a0"/>
<rect x="2488" y="641" width="62" height="2" fill="#6a6a6a"/><rect x="2488" y="643" width="62" height="2" fill="#7a5d34"/><rect x="2488" y="645" width="62" height="2" fill="#f3d3a0"/>
<rect x="2488" y="659" width="62" height="2" fill="#6a6a6a"/><rect x="2488" y="661" width="62" height="2" fill="#7a5d34"/><rect x="2488" y="663" width="62" height="2" fill="#f3d3a0"/>
<rect x="2488" y="675" width="62" height="2" fill="#6a6a6a"/><rect x="2488" y="677" width="62" height="2" fill="#7a5d34"/><rect x="2488" y="679" width="62" height="2" fill="#f3d3a0"/>
<rect x="2488" y="691" width="62" height="2" fill="#6a6a6a"/><rect x="2488" y="693" width="62" height="2" fill="#7a5d34"/><rect x="2488" y="695" width="62" height="2" fill="#f3d3a0"/>
<rect x="2488" y="707" width="62" height="2" fill="#6a6a6a"/><rect x="2488" y="709" width="62" height="2" fill="#7a5d34"/><rect x="2488" y="711" width="62" height="2" fill="#f3d3a0"/>
<rect x="2488" y="267" width="62" height="8" fill="#f3d3a0"/>
<rect x="2488" y="277" width="62" height="2" fill="#f6dfba"/>
<rect x="2488" y="216" width="1" height="504" fill="#c9c9c9"/><rect x="2549" y="216" width="1" height="504" fill="#c0c0c0"/><rect x="2488" y="719" width="62" height="1" fill="#c0c0c0"/>
</svg>
<div class="abs" style="left:2550px;top:216px;width:32px;height:504px;background:#fafafa;border-left:1px solid #e6e6e6;box-sizing:border-box"></div>
<div class="abs" style="left:2560px;top:223px;width:16px;height:36px;border-radius:8px;background:#7f7f7f"></div>
<div class="abs" style="left:0;top:752px;width:2584px;height:17px;background:#d2d2d2"></div>
<div class="abs" style="left:1286px;top:755px;width:12px;height:12px;border-radius:6px;background:#bdbdbd"></div>
<div class="abs" style="left:0;top:752px;width:2584px;height:1px;background:#b9b9b9"></div><div class="abs" style="left:0;top:768px;width:1443px;height:1px;background:#8e8e8e"></div>
<div class="abs" style="left:1458px;top:768px;width:1126px;height:1px;background:#8e8e8e"></div>
<div class="abs" style="left:1442px;top:769px;width:16px;height:791px;background:#d2d2d2;border-left:1px solid #b2b2b2;border-right:1px solid #b2b2b2;box-sizing:border-box"></div>
<div class="abs" style="left:1445px;top:1158px;width:12px;height:12px;border-radius:6px;background:#bcbcbc"></div>
<div id="detail">
<div class="drow mono" style="top:1px"><div class="bg"></div><svg style="left:17.4px;top:8px" width="12" height="18" viewBox="0 0 12 18"><path d="M2 2 L9.5 9 L2 16" fill="none" stroke="#b2b2b2" stroke-width="2.6" stroke-linecap="round" stroke-linejoin="round"/></svg><span class="tx" style="left:50px">System Event 591: 118 bytes</span></div>
<div class="drow mono" style="top:37px"><div class="bg"></div><svg style="left:17.4px;top:8px" width="12" height="18" viewBox="0 0 12 18"><path d="M2 2 L9.5 9 L2 16" fill="none" stroke="#b2b2b2" stroke-width="2.6" stroke-linecap="round" stroke-linejoin="round"/></svg><span class="tx" style="left:50px">Sysdig Event</span></div>
<div class="drow mono" style="top:73px"><div class="bg"></div><svg style="left:17.4px;top:8px" width="12" height="18" viewBox="0 0 12 18"><path d="M2 2 L9.5 9 L2 16" fill="none" stroke="#b2b2b2" stroke-width="2.6" stroke-linecap="round" stroke-linejoin="round"/></svg><span class="tx" style="left:50px">Event Information</span></div>
<div class="drow mono" style="top:109px"><div class="bg"></div><svg style="left:17.4px;top:8px" width="12" height="18" viewBox="0 0 12 18"><path d="M2 2 L9.5 9 L2 16" fill="none" stroke="#b2b2b2" stroke-width="2.6" stroke-linecap="round" stroke-linejoin="round"/></svg><span class="tx" style="left:50px">Event Arguments</span></div>
<div class="drow mono" style="top:145px"><div class="bg"></div><svg style="left:17.4px;top:8px" width="12" height="18" viewBox="0 0 12 18"><path d="M2 2 L9.5 9 L2 16" fill="none" stroke="#b2b2b2" stroke-width="2.6" stroke-linecap="round" stroke-linejoin="round"/></svg><span class="tx" style="left:50px">Process Information</span></div>
<div class="drow mono" style="top:181px"><div class="bg"></div><svg style="left:17.4px;top:8px" width="12" height="18" viewBox="0 0 12 18"><path d="M2 2 L9.5 9 L2 16" fill="none" stroke="#b2b2b2" stroke-width="2.6" stroke-linecap="round" stroke-linejoin="round"/></svg><span class="tx" style="left:50px">Process Ancestors</span></div>
<div class="drow mono" style="top:217px"><div class="bg"></div><svg style="left:17.4px;top:8px" width="12" height="18" viewBox="0 0 12 18"><path d="M2 2 L9.5 9 L2 16" fill="none" stroke="#b2b2b2" stroke-width="2.6" stroke-linecap="round" stroke-linejoin="round"/></svg><span class="tx" style="left:50px">File Descriptor Information</span></div>
<div class="drow mono" style="top:253px"><div class="bg"></div><svg style="left:17.4px;top:8px" width="12" height="18" viewBox="0 0 12 18"><path d="M2 2 L9.5 9 L2 16" fill="none" stroke="#b2b2b2" stroke-width="2.6" stroke-linecap="round" stroke-linejoin="round"/></svg><span class="tx" style="left:50px">Container Information</span></div>
<div class="drow mono" style="top:289px"><div class="bg"></div><svg style="left:17.4px;top:8px" width="12" height="18" viewBox="0 0 12 18"><path d="M2 2 L9.5 9 L2 16" fill="none" stroke="#b2b2b2" stroke-width="2.6" stroke-linecap="round" stroke-linejoin="round"/></svg><span class="tx" style="left:50px">User Information</span></div>
<div class="drow mono" style="top:325px"><div class="bg"></div><svg style="left:17.4px;top:8px" width="12" height="18" viewBox="0 0 12 18"><path d="M2 2 L9.5 9 L2 16" fill="none" stroke="#b2b2b2" stroke-width="2.6" stroke-linecap="round" stroke-linejoin="round"/></svg><span class="tx" style="left:50px">Group Information</span></div>
<div class="drow mono" style="top:361px"><div class="bg"></div><svg style="left:13px;top:12px" width="18" height="12" viewBox="0 0 18 12"><path d="M2 2 L9 9.5 L16 2" fill="none" stroke="#b2b2b2" stroke-width="2.4" stroke-linecap="round" stroke-linejoin="round"/></svg><span class="tx" style="left:50px">Executable and Linkable Format</span></div>
<div class="drow mono" style="top:397px;background:#d4d4d4"><svg style="left:53px;top:12px" width="18" height="12" viewBox="0 0 18 12"><path d="M2 2 L9 9.5 L16 2" fill="none" stroke="#939393" stroke-width="2.4" stroke-linecap="round" stroke-linejoin="round"/></svg><span class="tx" style="left:90px;color:#000">Header</span></div>
<div class="drow mono" style="top:433px"><span class="tx" style="left:129px">Magic Bytes: 7f454c46</span></div>
<div class="drow mono" style="top:469px"><span class="tx" style="left:129px">File Class: 64<s>-</s>bit object (0x02)</span></div>
<div class="drow mono" style="top:505px"><span class="tx" style="left:129px">Data Encoding: Least Significant Bit (0x01)</span></div>
<div class="drow mono" style="top:541px"><span class="tx" style="left:129px">File Version: Current (0x01)</span></div>
<div class="drow mono" style="top:577px"><span class="tx" style="left:129px">OS ABI: No extensions or unspecified (0x00)</span></div>
<div class="drow mono" style="top:613px"><span class="tx" style="left:129px">ABI Version: 0x00 (0)</span></div>
<div class="drow mono" style="top:649px"><span class="tx" style="left:129px">File Padding: 00000000000000</span></div>
<div class="drow mono" style="top:685px"><span class="tx" style="left:129px">Type: Shared object file (0x0003)</span></div>
<div class="drow mono" style="top:721px"><span class="tx" style="left:129px">Machine: AMD x86<s>-</s>64 architecture (0x003e)</span></div>
<div class="drow mono" style="top:757px"><span class="tx" style="left:129px">Version: Current (0x00000001)</span></div>
</div>
<div id="bytes"><div class="abs" style="left:0;top:0;width:96px;height:790px;background:#ececec"></div>
<div class="brow mono" style="top:1px"><span style="left:17px;color:#9b9b9b">0000</span><span style="left:110px;color:#262626">08 00 50 00 40 03 00 00  00 00 00 00 7f 45 4c 46</span><span class="asc" style="left:908px;color:#262626"><b>·</b><b>·</b>P<b>·</b>@<b>·</b><b>·</b><b>·</b> <b>·</b><b>·</b><b>·</b><b>·</b><b>·</b>ELF</span></div>
<div class="brow mono" style="top:31px"><div class="abs" style="left:252px;top:0;width:32px;height:32px;background:#a6ccfc"></div><div class="abs" style="left:954px;top:0;width:18px;height:32px;background:#a6ccfc"></div><span style="left:17px;color:#4a4a4a">0010</span><span style="left:110px;color:#262626">02 01 01 00 00 00 00 00  00 00 00 00 03 00 3e 00</span><span class="asc" style="left:908px;color:#262626"><b>·</b><b>·</b><b>·</b><u>·</u><b>·</b><b>·</b><b>·</b><b>·</b> <b>·</b><b>·</b><b>·</b><b>·</b><b>·</b><b>·</b>&gt;<b>·</b></span></div>
<div class="brow mono" style="top:61px"><span style="left:17px;color:#9b9b9b">0020</span><span style="left:110px;color:#262626">01 00 00 00 00 00 00 00  00 00 00 00 40 00 00 00</span><span class="asc" style="left:908px;color:#262626"><b>·</b><b>·</b><b>·</b><b>·</b><b>·</b><b>·</b><b>·</b><b>·</b> <b>·</b><b>·</b><b>·</b><b>·</b>@<b>·</b><b>·</b><b>·</b></span></div>
<div class="brow mono" style="top:91px"><span style="left:17px;color:#9b9b9b">0030</span><span style="left:110px;color:#262626">00 00 00 00 d8 4f 0a 00  00 00 00 00 00 00 00 00</span><span class="asc" style="left:908px;color:#262626"><b>·</b><b>·</b><b>·</b><b>·</b><b>·</b>O<b>·</b><b>·</b> <b>·</b><b>·</b><b>·</b><b>·</b><b>·</b><b>·</b><b>·</b><b>·</b></span></div>
<div class="brow mono" style="top:121px"><span style="left:17px;color:#9b9b9b">0040</span><span style="left:110px;color:#262626">40 00 38 00 0b 00 40 00  1d 00 1c 00 01 00 00 00</span><span class="asc" style="left:908px;color:#262626">@<b>·</b>8<b>·</b><b>·</b><b>·</b>@<b>·</b> <b>·</b><b>·</b><b>·</b><b>·</b><b>·</b><b>·</b><b>·</b><b>·</b></span></div>
<div class="brow mono" style="top:151px"><span style="left:17px;color:#9b9b9b">0050</span><span style="left:110px;color:#262626">04 00 00 00 00 00 00 00  00 00 00 00</span><span class="asc" style="left:908px;color:#262626"><b>·</b><b>·</b><b>·</b><b>·</b><b>·</b><b>·</b><b>·</b><b>·</b> <b>·</b><b>·</b><b>·</b><b>·</b></span></div>
</div>
<div class="abs" style="left:0;top:1558px;width:2584px;height:2px;background:#c9c9c9"></div>
<div id="status"><div class="abs" style="left:0;top:0;width:2584px;height:2px;background:linear-gradient(#8e8e8e,#8e8e8e 55%,#d8d8d8)"></div>
<div class="abs" style="left:20px;top:11.8px;width:28px;height:28px;border-radius:50%;box-sizing:border-box;border:2.2px solid #565c5b;background:linear-gradient(160deg,#c6c8c3,#a8aba6)"></div>
<svg class="abs" style="left:66px;top:8px" width="40" height="40" viewBox="66 1568 40 40" font-family="DejaVu Sans, sans-serif">
<defs><linearGradient id="gHdrS" x1="0" y1="0" x2="1" y2="0"><stop offset="0" stop-color="#5bb6ea"/><stop offset="1" stop-color="#1a9ae0"/></linearGradient></defs>
<rect x="71.3" y="1572.4" width="21.4" height="27.3" fill="#f7f7ef" stroke="#c4c4bc" stroke-width="0.7"/>
<path d="M71.1 1572.2 L87.5 1572.2 L88.6 1573.4 L88.6 1578.9 L71.1 1578.9 Z" fill="url(#gHdrS)"/>
<path d="M80.4 1573.6 C77.6 1574.2 76.2 1576.6 75.8 1579 L80 1579 C79.5 1577 79.6 1575 80.4 1573.6 Z" fill="#f7f7ef"/>
<g font-size="3.6" fill="#b9b9b4"><text x="74" y="1585.4" textLength="15" lengthAdjust="spacingAndGlyphs">00101</text><text x="74" y="1591" textLength="15" lengthAdjust="spacingAndGlyphs">01010</text><text x="74" y="1596.6" textLength="15" lengthAdjust="spacingAndGlyphs">01100</text></g>
<path d="M95 1574.9 L83.2 1586" stroke="#555753" stroke-width="5.4"/>
<path d="M96 1574 L94.6 1575.3" stroke="#6a6c68" stroke-width="5.4" stroke-linecap="round"/>
<path d="M81.3 1584.1 L85.1 1588 L78.1 1591.9 Z" fill="#111"/>
<path d="M82.1 1583.3 L85.9 1587.2 L85.1 1588 L81.3 1584.1 Z" fill="#fff"/>
</svg>

<div class="ut" style="left:138.80px;top:13.68px;font-size:22px;letter-spacing:0.963px;color:#1d1d1d;">Text item (text), 64 bytes</div>
<div class="abs" style="left:1627px;top:22px;width:12px;height:12px;border-radius:6px;background:#d0d0d0"></div>
<div class="ut" style="left:1662.20px;top:13.68px;font-size:22px;letter-spacing:0.747px;color:#1d1d1d;">Events: 3271 · Displayed: 1940 (59.3%)</div>
<div class="abs" style="left:2257px;top:22px;width:12px;height:12px;border-radius:6px;background:#d0d0d0"></div>
<div class="ut" style="left:2292.30px;top:13.68px;font-size:22px;letter-spacing:0.736px;color:#1d1d1d;">Profile: Gerald&#x27;s Syscalls</div>
</div>
</div></body></html>
